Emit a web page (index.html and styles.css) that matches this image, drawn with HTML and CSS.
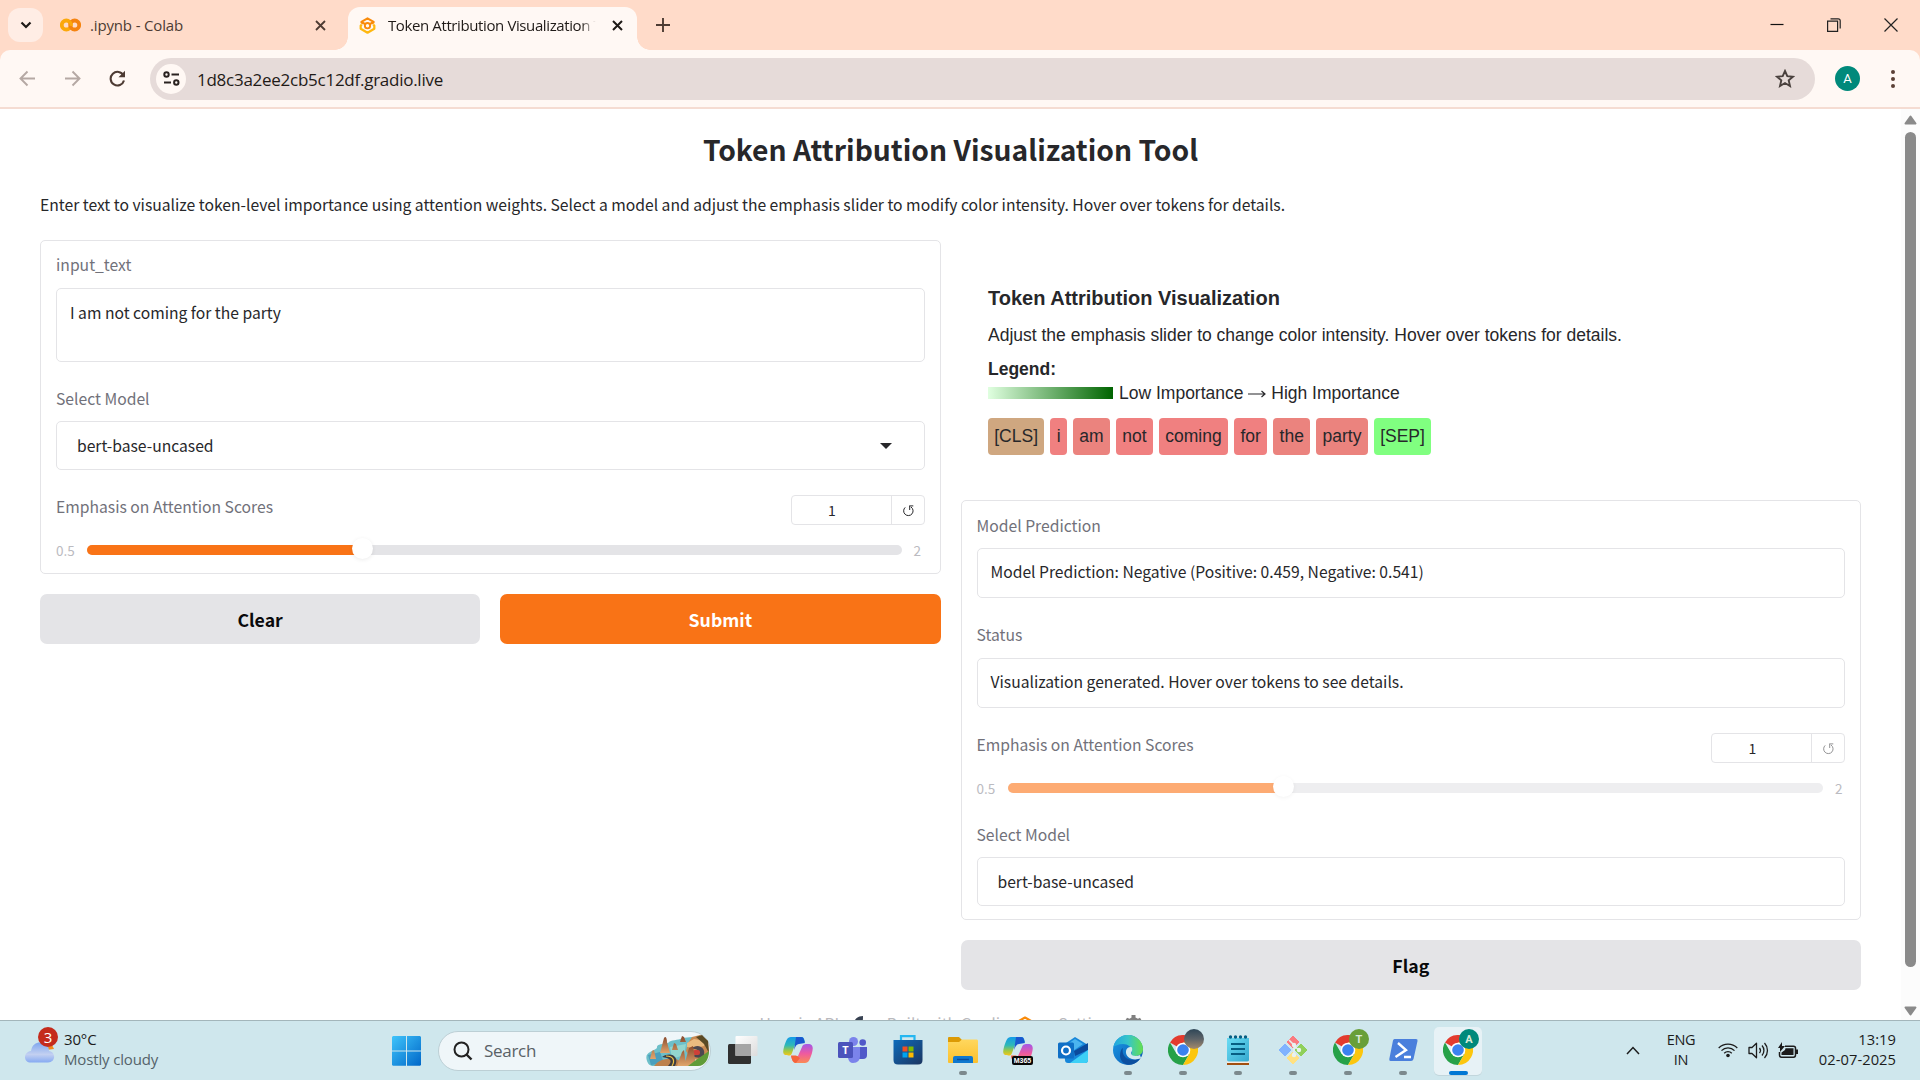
FILE: index.html
```html
<!DOCTYPE html>
<html lang="en">
<head>
<meta charset="utf-8">
<title>Token Attribution Visualization Tool</title>
<link rel="stylesheet" href="styles.css">
</head>
<body>
<svg class="defs" width="0" height="0" aria-hidden="true">
  <defs>
    <linearGradient id="gWin" x1="0" y1="0" x2="1" y2="1"><stop offset="0" stop-color="#3fc4fb"/><stop offset="1" stop-color="#0067c8"/></linearGradient>
    <linearGradient id="gCloud" x1="0" y1="0" x2="0" y2="1"><stop offset="0" stop-color="#7fa6ee"/><stop offset=".6" stop-color="#c3d0f1"/><stop offset="1" stop-color="#86aaf2"/></linearGradient>
    <linearGradient id="gCopA" x1="0" y1="0" x2="0" y2="1"><stop offset="0" stop-color="#129be9"/><stop offset=".45" stop-color="#2fb9b6"/><stop offset=".75" stop-color="#a5c93e"/><stop offset="1" stop-color="#f5c51c"/></linearGradient>
    <linearGradient id="gCopB" x1="0" y1="0" x2="0" y2="1"><stop offset="0" stop-color="#a457e8"/><stop offset=".5" stop-color="#ee5aa0"/><stop offset="1" stop-color="#fb8a55"/></linearGradient>
    <linearGradient id="gStore" x1="0" y1="0" x2="1" y2="1"><stop offset="0" stop-color="#0d6cbc"/><stop offset="1" stop-color="#1c3560"/></linearGradient>
    <linearGradient id="gFold" x1="0" y1="0" x2="0" y2="1"><stop offset="0" stop-color="#ffd75e"/><stop offset="1" stop-color="#fbc02d"/></linearGradient>
    <linearGradient id="gEdge" x1="0" y1="0" x2="1" y2="0"><stop offset="0" stop-color="#20a5e0"/><stop offset=".5" stop-color="#36c5c9"/><stop offset="1" stop-color="#66e04c"/></linearGradient>
    <linearGradient id="gEdgeB" x1="0" y1="0" x2="1" y2="1"><stop offset="0" stop-color="#1a9be6"/><stop offset="1" stop-color="#0a55b0"/></linearGradient>
    <linearGradient id="gNote" x1="0" y1="0" x2="1" y2="1"><stop offset="0" stop-color="#6bdcf4"/><stop offset="1" stop-color="#35a9cf"/></linearGradient>
    <linearGradient id="gPhoto" x1="0" y1="0" x2="0" y2="1"><stop offset="0" stop-color="#2e4657"/><stop offset=".5" stop-color="#5d6368"/><stop offset="1" stop-color="#a58a6a"/></linearGradient>
    <linearGradient id="gTask" x1="0" y1="0" x2="1" y2="1"><stop offset="0" stop-color="#fff"/><stop offset="1" stop-color="#dcdcdc"/></linearGradient>
    <linearGradient id="gRock" x1="0" y1="0" x2="0" y2="1"><stop offset="0" stop-color="#8a4a2c"/><stop offset="1" stop-color="#e0a56c"/></linearGradient>
    <symbol id="gradio" viewBox="0 0 18 18">
      <path d="M9 1.500 15.500 5.200 9 9 2.500 5.200Z" fill="none" stroke="#f98b0b" stroke-width="2.200" stroke-linejoin="round"/>
      <path d="M2 5.500 4.500 7M16 5.500 13.500 7" stroke="#f98b0b" stroke-width="2"/>
      <path d="M3 8 1.800 9V12.400L9 16.600 16.200 12.400V9L15 8" fill="none" stroke="#ffb810" stroke-width="2.400" stroke-linejoin="round"/>
      <circle cx="9" cy="9.200" r="2.800" fill="#fff8f4" stroke="#f98b0b" stroke-width="2"/>
    </symbol>
    <symbol id="chrome" viewBox="0 0 30 30">
      <path d="M15 15 2 7.500A15 15 0 0 1 28 7.500H15Z" fill="#e33b2e"/>
      <path d="M2 7.500A15 15 0 0 0 15 30L21.500 18.800 8.500 18.800Z" fill="#26a148"/>
      <path d="M28 7.500A15 15 0 0 1 15 30L21.500 18.800 21.500 11.200 15 7.500Z" fill="#fcc60e"/>
      <circle cx="15" cy="15" r="7.300" fill="#fff"/><circle cx="15" cy="15" r="5.800" fill="#3b82f0"/>
    </symbol>
    <symbol id="copilot" viewBox="0 0 30 28">
      <path d="M8 1H18C21 1 21 3 22 6L13 6 9 17C8 20 6 20 4 19-1 19 0 15 1 11 3 5 4 1 8 1Z" fill="url(#gCopA)"/>
      <path d="M13 1H18C21 1 21 4 22 7L16 8C13 8 12 12 11 14Z" fill="#1a58cf"/>
      <path d="M22 27H13C10 27 9 24 8 20H15L19 11C20 8 22 8 25 8 31 8 30 13 29 17 27 23 26 27 22 27Z" fill="url(#gCopB)"/>
      <path d="M8 19.500H13L17 22 13 27C10 27 9 24 8 19.500Z" fill="#f5643c"/>
    </symbol>
    <symbol id="reset" viewBox="0 0 14 14">
      <path d="M4.200 3.400A4.700 4.700 0 1 0 10 3M8.200 1.900H12.300M8.700 2V6" fill="none" stroke="currentColor" stroke-width="1"/>
    </symbol>
  </defs>
</svg>

<header class="tabstrip">
  <button class="tab-search"><svg width="12" height="8" viewBox="0 0 12 8"><path d="M1.500 1.500 6 6 10.500 1.500" fill="none" stroke="#1f1a17" stroke-width="2.200"/></svg></button>
  <div class="tab">
    <svg class="tab-icon" width="21" height="14" viewBox="0 0 21 14"><circle cx="6.300" cy="7" r="4.500" fill="none" stroke="#fba80b" stroke-width="3.800"/><circle cx="14.700" cy="7" r="4.500" fill="none" stroke="#f58310" stroke-width="3.800"/><path d="M9.500 3.300A5 5 0 0 1 11 8" fill="none" stroke="#fba80b" stroke-width="3"/></svg>
    <span class="tab-title">.ipynb - Colab</span>
    <svg class="tab-close" width="11" height="11" viewBox="0 0 11 11"><path d="M1 1 10 10M10 1 1 10" stroke="#4d3b33" stroke-width="1.800"/></svg>
  </div>
  <div class="tab active">
    <svg class="tab-icon" width="17" height="17"><use href="#gradio"/></svg>
    <span class="tab-title faded">Token Attribution Visualization T</span>
    <svg class="tab-close" width="11" height="11" viewBox="0 0 11 11"><path d="M1 1 10 10M10 1 1 10" stroke="#1f1a17" stroke-width="2"/></svg>
  </div>
  <svg class="tab-new" width="14" height="14" viewBox="0 0 14 14"><path d="M7 0V14M0 7H14" stroke="#4d3b33" stroke-width="1.900"/></svg>
  <div class="win-controls">
    <svg width="14" height="14" viewBox="0 0 14 14"><path d="M.5 6.500H13.500" stroke="#111" stroke-width="1.200"/></svg>
    <svg width="14" height="14" viewBox="0 0 14 14"><path d="M.6 3.100H10.600V13.300H.6ZM3.500 .8H11.200Q13.200 .8 13.200 2.800V10.500" fill="none" stroke="#222" stroke-width="1.200"/></svg>
    <svg width="14" height="14" viewBox="0 0 14 14"><path d="M.5 .5 13.500 13.500M13.500 .5 .5 13.500" stroke="#222" stroke-width="1.200"/></svg>
  </div>
</header>

<div class="toolbar-back"><nav class="toolbar">
  <svg width="17" height="17" viewBox="0 0 17 17"><path d="M16 8.500H2M8.500 1.500 1.500 8.500 8.500 15.500" fill="none" stroke="#b5a8a3" stroke-width="1.900"/></svg>
  <svg width="17" height="17" viewBox="0 0 17 17"><path d="M1 8.500H15M8.500 1.500 15.500 8.500 8.500 15.500" fill="none" stroke="#b5a8a3" stroke-width="1.900"/></svg>
  <svg class="reload" width="17" height="17" viewBox="0 0 17 17"><path d="M14.500 5.500A6.800 6.800 0 1 0 15 10.500" fill="none" stroke="#4d3b33" stroke-width="2.100"/><path d="M16 .8V7.300H9.500Z" fill="#4d3b33"/></svg>
  <div class="omnibox">
    <span class="site-info"><svg width="17" height="15" viewBox="0 0 17 15"><g fill="none" stroke="#2a2220" stroke-width="2"><circle cx="3.500" cy="3.500" r="2.200"/><path d="M8.500 3.500H16M1 11.500H8"/><circle cx="13.300" cy="11.500" r="2.200"/></g></svg></span>
    <span class="url">1d8c3a2ee2cb5c12df.gradio.live</span>
    <svg class="star" width="20" height="19" viewBox="0 0 20 19"><path d="M10 2 12.300 7.200 18 7.700 13.700 11.400 15 17 10 14 5 17 6.300 11.400 2 7.700 7.700 7.200Z" fill="none" stroke="#4a413e" stroke-width="1.900"/></svg>
  </div>
  <span class="avatar">A</span>
  <svg class="menu" width="4" height="18" viewBox="0 0 4 18"><g fill="#5b4036"><circle cx="2" cy="2" r="2"/><circle cx="2" cy="9" r="2"/><circle cx="2" cy="16" r="2"/></g></svg>
</nav></div>

<div class="viewport">
  <main class="page">
    <h1>Token Attribution Visualization Tool</h1>
    <p class="description"><span>Enter text to visualize token-level importance using attention weights. Select a model and adjust the emphasis slider to modify color intensity. Hover over tokens for details.</span></p>
    <div class="columns">
      <section class="column">
        <div class="panel">
          <div class="label">input_text</div>
          <div class="field textarea">I am not coming for the party</div>
          <div class="label tight">Select Model</div>
          <div class="field select"><span>bert-base-uncased</span><svg width="12" height="6" viewBox="0 0 12 6"><path d="M0 0H12L6 6Z" fill="#27272a"/></svg></div>
          <div class="slider-head"><div class="label">Emphasis on Attention Scores</div>
            <div class="number"><span>1</span><svg width="14" height="14"><use href="#reset"/></svg></div></div>
          <div class="slider"><span>0.5</span><div class="track"><div class="fill"></div><div class="thumb"></div></div><span>2</span></div>
        </div>
        <div class="buttons"><button class="button">Clear</button><button class="button primary">Submit</button></div>
      </section>
      <section class="column">
        <div class="visual">
          <h3>Token Attribution Visualization</h3>
          <p>Adjust the emphasis slider to change color intensity. Hover over tokens for details.</p>
          <div class="legend"><b>Legend:</b><div class="legend-row"><i></i><span>Low Importance <svg class="arrow" width="18" height="10" viewBox="0 0 18 10"><path d="M0 5H17M13.500 2 17 5 13.500 8" fill="none" stroke="#27272a" stroke-width="1.200"/></svg> High Importance</span></div></div>
          <div class="tokens"><span class="t-cls">[CLS]</span><span>i</span><span class="warm">am</span><span>not</span><span>coming</span><span>for</span><span class="warm">the</span><span class="warm">party</span><span class="t-sep">[SEP]</span></div>
        </div>
        <div class="panel output">
          <div class="label tight">Model Prediction</div>
          <div class="field">Model Prediction: Negative (Positive: 0.459, Negative: 0.541)</div>
          <div class="label">Status</div>
          <div class="field">Visualization generated. Hover over tokens to see details.</div>
          <div class="slider-head"><div class="label">Emphasis on Attention Scores</div>
            <div class="number disabled"><span>1</span><svg width="14" height="14"><use href="#reset"/></svg></div></div>
          <div class="slider disabled"><span>0.5</span><div class="track"><div class="fill"></div><div class="thumb"></div></div><span>2</span></div>
          <div class="label">Select Model</div>
          <div class="field select"><span>bert-base-uncased</span></div>
        </div>
        <button class="button">Flag</button>
      </section>
    </div>
    <footer class="footer">
      <span>Use via API</span><svg class="f-rocket" width="14" height="16" viewBox="0 0 14 16"><path d="M12 0C8 0 5 2 4 4L0 6 4 8 6 12 9 10C12 7 12 4 12 0Z" fill="#374151"/></svg>
      <i>·</i><span class="f-built">Built with Gradio</span><svg class="f-gradio" width="18" height="18"><use href="#gradio"/></svg>
      <i>·</i><span class="f-settings">Settings</span><svg class="f-gear" width="17" height="18" viewBox="0 0 17 18"><path d="M6.500 0H10.500V2.500L13 3.800 15 2.800 17 6 15 7.500V10.500L17 12 15 15 12.500 14 10.500 15.500V18H6.500V15.500L4.500 14 2 15 0 12 2 10.500V7.500L0 6 2 2.800 4.500 3.800 6.500 2.500Z" fill="#808080"/></svg>
    </footer>
  </main>
  <aside class="scrollbar">
    <svg width="13" height="10" viewBox="0 0 13 10"><path d="M6.500 1.500 11.500 8.500H1.500Z" fill="#8a8a8a" stroke="#8a8a8a" stroke-width="2" stroke-linejoin="round"/></svg>
    <div class="scroll-thumb"></div>
    <svg class="down" width="13" height="10" viewBox="0 0 13 10"><path d="M6.500 8.500 11.500 1.500H1.500Z" fill="#8a8a8a" stroke="#8a8a8a" stroke-width="2" stroke-linejoin="round"/></svg>
  </aside>
</div>

<footer class="taskbar">
  <div class="weather">
    <div class="weather-icon"><svg width="31" height="21" viewBox="0 0 31 21"><path d="M22 8 27 1 30 7Z" fill="#f48a1c"/><path d="M7 20.500C-1 20.500-1 10 7 9 8 2 13 0 17 .5 22 1 25 4 25 9 32 10 32 20.500 24 20.500Z" fill="url(#gCloud)"/></svg><b>3</b></div>
    <div class="weather-text"><div>30°C</div><div class="muted">Mostly cloudy</div></div>
  </div>
  <svg class="start" width="29" height="30" viewBox="0 0 29 30"><path d="M1 0H14V14.400H0V1ZM15 0H28L29 1V14.400H15ZM0 15.400H14V29.800H1L0 29ZM15 15.400H29V29L28 29.800H15Z" fill="url(#gWin)"/></svg>
  <div class="search">
    <svg width="20" height="20" viewBox="0 0 20 20"><circle cx="8.500" cy="8.500" r="7" fill="none" stroke="#222" stroke-width="2"/><path d="M13.500 13.500 18.500 18.500" stroke="#222" stroke-width="2.400"/></svg>
    <span>Search</span>
    <svg class="scene" width="63" height="32" viewBox="0 0 63 32">
      <path d="M1 26C-2 17 6 17 11 13 10 9 17 9 22 8 25 4 32 6 36 3L46 2 50 14 40 31H8C4 31 2 29 1 26Z" fill="#6cbfc9"/>
      <path d="M2 20 14 17 18 28 5 30Z" fill="#4a9fbd"/><path d="M24 12 40 9 38 20 26 24Z" fill="#92d6cf"/>
      <path d="M42 8 46 2 54 0 62 6 63 18 58 26 46 24 40 16Z" fill="#c98a52"/>
      <path d="M41 8 48 4 60 6 58 11 50 13 41 12Z" fill="#eabb80"/>
      <path d="M50 2 56 0 62 6 63 18 58 9Z" fill="#5a4a25"/>
      <path d="M45 14C51 8 60 12 58 20 56 24 50 23 46 21L50 19C55 18 53 13 45 14Z" fill="#4c4750"/>
      <rect x="47" y="15" width="7" height="5" rx="2" fill="#cf4038"/>
      <path d="M14 18 18 3C20 0 21 4 21 7L24 18Z" fill="url(#gRock)"/>
      <path d="M4 24 6 16 8 15 10 24ZM26 15 28 8 30 9 32 15ZM34 7 36 1 38 2 40 7Z" fill="url(#gRock)"/>
      <path d="M8 31C13 24 22 23 30 24L44 31Z" fill="#bd814d"/>
      <path d="M16 22C25 16 34 22 29 31H22C28 25 23 23 16 22Z" fill="#3c3d42"/>
      <path d="M20 21C28 21 29 26 26 31" stroke="#f3c544" stroke-width="1.200" fill="none"/>
      <path d="M31 31 36 17 38 15 40 31ZM38 31 43 13 47 11 50 31Z" fill="url(#gRock)"/>
      <path d="M42 31 50 25 63 16C63 24 59 31 52 31Z" fill="#5f9b38"/>
    </svg>
  </div>
  <div class="apps">
    <div class="app"><svg width="30" height="30" viewBox="0 0 30 30"><rect y="9" width="23" height="20" rx="1.500" fill="#303030"/><rect x="7.500" y="1" width="22" height="20" rx="1" fill="url(#gTask)"/><rect x="7.500" y="9" width="15.500" height="12" fill="#a5a5a5"/></svg></div>
    <div class="app"><svg width="30" height="28"><use href="#copilot"/></svg></div>
    <div class="app"><svg width="30" height="28" viewBox="0 0 30 28"><circle cx="15.500" cy="5.500" r="4.500" fill="#7b83eb"/><circle cx="24.700" cy="6.500" r="3.300" fill="#5059c9"/><path d="M20 11H29V19Q29 23 25 23H20Z" fill="#5059c9"/><path d="M10 11H22V20Q22 27 15 27 11 27 10 22Z" fill="#7b83eb"/><rect y="6" width="15" height="16" rx="1.500" fill="#4b53bc"/><text x="7.500" y="18" text-anchor="middle" class="icon-letter">T</text></svg></div>
    <div class="app"><svg width="30" height="30" viewBox="0 0 30 30"><path d="M8 6V1.200H21.500V6" fill="none" stroke="#24b7f1" stroke-width="2.200"/><path d="M.5 5H29.500V25Q29.500 29.500 25 29.500H5Q.5 29.500 .5 25Z" fill="url(#gStore)"/><path d="M9.500 11.500H14.500V16.500H9.500Z" fill="#f25022"/><path d="M15.500 11.500H20.500V16.500H15.500Z" fill="#7fba00"/><path d="M9.500 17.500H14.500V22.500H9.500Z" fill="#00a4ef"/><path d="M15.500 17.500H20.500V22.500H15.500Z" fill="#ffb900"/></svg></div>
    <div class="app running"><svg width="30" height="28" viewBox="0 0 30 28"><path d="M0 2Q0 1 1 1H11L14 4V9H0Z" fill="#dc9a05"/><path d="M0 6H11L14 3.500H29Q30 3.500 30 5V26Q30 27 29 27H1Q0 27 0 26Z" fill="url(#gFold)"/><path d="M5 27V22Q5 20 7 20H23Q25 20 25 22V27Z" fill="#0f78cf"/><path d="M9 23.500H21" stroke="#074c9c" stroke-width="1.400"/></svg></div>
    <div class="app"><svg width="31" height="29" viewBox="0 0 31 29"><use href="#copilot" width="30" height="28"/><rect x="9" y="20" width="21" height="9" rx="2" fill="#080808"/><text x="19.500" y="27.300" text-anchor="middle" class="icon-tiny">M365</text></svg></div>
    <div class="app"><svg width="30" height="28" viewBox="0 0 30 28"><path d="M5 9 17 1 30 9V24Q30 27 27 27H10Q7 27 7 24Z" fill="#1686d9"/><path d="M8 9 17 3 25 8 12 17Z" fill="#4bb4ef"/><path d="M16 15 30 7V14L17 20Z" fill="#0b4a9c"/><path d="M12 27 30 14V24Q30 27 27 27Z" fill="#3dd0f6"/><rect y="6.500" width="16" height="16" rx="1.500" fill="#0f6fc6"/><circle cx="8" cy="14.500" r="4" fill="none" stroke="#fff" stroke-width="2.200"/></svg></div>
    <div class="app running"><svg width="30" height="30" viewBox="0 0 30 30"><circle cx="15" cy="15" r="15" fill="url(#gEdgeB)"/><path d="M.3 12A15 15 0 0 1 30 14C30 19 26 21 22 21 18 21 18 19 19 17 19 12 15 9 10 9 5 9 2 11 .3 12Z" fill="url(#gEdge)"/><path d="M10 13C8 20 14 28 27 24 20 33 8 31 7 21 7 17 8 14 10 13Z" fill="#0c4f9f"/><path d="M18.500 12C20 14 19 16 18 18 18 21 23 22 27 20L28 23C20 27 12 22 13 16 13.500 13 16 11.500 18.500 12Z" fill="#d3e9ef"/></svg></div>
    <div class="app running"><svg width="36" height="36" viewBox="0 0 36 36"><use href="#chrome" y="6" width="30" height="30"/><circle cx="26" cy="10" r="10" fill="url(#gPhoto)"/></svg></div>
    <div class="app running"><svg width="22" height="30" viewBox="0 0 22 30"><path d="M0 26H22V30H0Z" fill="#a24f10"/><path d="M0 24H22V28H0Z" fill="#f4ece4"/><path d="M0 3H22V25Q22 26.500 20 26.500H2Q0 26.500 0 25Z" fill="url(#gNote)"/><path d="M4 9H18M4 14H18M4 19H18" stroke="#075e83" stroke-width="1.800"/><g fill="#075e83"><circle cx="3.500" cy="2" r="1.700"/><circle cx="8.500" cy="2" r="1.700"/><circle cx="13.500" cy="2" r="1.700"/><circle cx="18.500" cy="2" r="1.700"/></g></svg></div>
    <div class="app running"><svg width="30" height="30" viewBox="0 0 30 30"><g stroke-linejoin="round"><path d="M15 1 21 7 15 13 9 7Z" fill="#fb7b80" stroke="#fb7b80"/><path d="M7 9 13 15 7 21 1 15Z" fill="#80b3ff" stroke="#80b3ff"/><path d="M23 9 29 15 23 21 17 15Z" fill="#8fd05b" stroke="#8fd05b"/><path d="M15 17 21 23 15 29 9 23Z" fill="#ffe182" stroke="#ffe182"/></g><path d="M11 5 16 10V20M16 11 21 15" stroke="#e8f2f0" stroke-width="1.500" fill="none"/><g fill="#e8f2f0"><circle cx="16" cy="10" r="2.200"/><circle cx="21" cy="15" r="2.200"/><circle cx="16" cy="20" r="2.200"/></g></svg></div>
    <div class="app running"><svg width="36" height="36" viewBox="0 0 36 36"><use href="#chrome" y="6" width="30" height="30"/><circle cx="26" cy="10" r="10" fill="#689f38"/><text x="26" y="14" text-anchor="middle" class="icon-badge">T</text></svg></div>
    <div class="app running"><svg width="29" height="22" viewBox="0 0 29 22"><path d="M5.500 0H27Q29 0 28.500 2L24.500 20Q24 22 22 22H1.500Q0 22 .3 20L4 1.500Q4.300 0 5.500 0Z" fill="#4a7fdc"/><path d="M9 4 17 11 6.500 18M15 18H22" fill="none" stroke="#fff" stroke-width="2.400"/></svg></div>
    <div class="app running current"><svg width="36" height="36" viewBox="0 0 36 36"><use href="#chrome" y="6" width="30" height="30"/><circle cx="26" cy="10" r="10" fill="#00897b"/><text x="26" y="14" text-anchor="middle" class="icon-badge">A</text></svg></div>
  </div>
  <div class="tray">
    <svg width="14" height="9" viewBox="0 0 14 9"><path d="M1 8 7 1.500 13 8" fill="none" stroke="#1c1c1c" stroke-width="1.500"/></svg>
    <div class="lang"><div>ENG</div><div>IN</div></div>
    <svg class="wifi" width="20" height="16" viewBox="0 0 20 16"><g fill="none" stroke="#1c1c1c" stroke-width="1.300"><path d="M.7 6A13 13 0 0 1 19.300 6M3.500 8.600A9 9 0 0 1 16.500 8.600M6.200 11.200A5.400 5.400 0 0 1 13.800 11.200"/></g><circle cx="10" cy="13.500" r="1.800" fill="#1c1c1c"/></svg>
    <svg class="volume" width="21" height="17" viewBox="0 0 21 17"><g fill="none" stroke="#1c1c1c" stroke-width="1.300"><path d="M1 5.500H4L8.500 1.200V15.800L4 11.500H1Z" stroke-linejoin="round"/><path d="M11.500 6A4 4 0 0 1 11.500 11M14 3.500A7.500 7.500 0 0 1 14 13.500M16.500 1A11 11 0 0 1 16.500 16"/></g></svg>
    <svg class="battery" width="21" height="17" viewBox="0 0 21 17"><path d="M7 4.200H15.500Q17.500 4.200 17.500 6.200V13Q17.500 15.200 15.500 15.200H3.500Q1.500 15.200 1.500 13V10" fill="none" stroke="#1c1c1c" stroke-width="1.500"/><path d="M7.500 6.300H15.500V13H3.500V10.500L7 8Z" fill="#1c1c1c"/><path d="M18 7.500H20V12H18Z" fill="#1c1c1c"/><path d="M4 0V4H7L2 10V6H0Z" fill="#1c1c1c"/></svg>
    <div class="clock"><div>13:19</div><div>02-07-2025</div></div>
  </div>
</footer>
</body>
</html>
```
FILE: styles.css
```css
* { box-sizing: border-box; }
body {
  margin: 0;
  width: 1920px;
  height: 1080px;
  overflow: hidden;
  display: flex;
  flex-direction: column;
  background: #fff;
  font-family: "Noto Sans CJK SC", "Noto Sans", sans-serif;
  color: #27272a;
}
svg { display: block; flex: none; }
button { border: 0; font: inherit; padding: 0; }
.defs { position: absolute; }

/* Browser tabs */
.tabstrip {
  flex: none;
  height: 50px;
  display: flex;
  align-items: center;
  background: #ffdbc9;
  font-family: "Open Sans", "Noto Sans", sans-serif;
  font-size: 15px;
  color: #4d3b33;
}
.tab-search {
  width: 35px;
  height: 34px;
  margin-left: 8px;
  border-radius: 12px;
  background: #ffede5;
  display: grid;
  place-items: center;
}
.tab { display: flex; align-items: center; width: 305px; padding: 0 22px 0 17px; }
.tab-icon { margin-right: 9px; }
.tab-title { white-space: nowrap; letter-spacing: -.15px; }
.tab-close { margin-left: auto; }
.tab.active {
  position: relative;
  align-self: flex-end;
  width: 289px;
  height: 43px;
  padding: 0 14px 7px 11px;
  border-radius: 12px 12px 0 0;
  background: #fff8f4;
  color: #1f1a17;
}
.tab.active::before, .tab.active::after {
  content: "";
  position: absolute;
  bottom: 0;
  width: 13px;
  height: 13px;
}
.tab.active::before { left: -13px; background: radial-gradient(circle at 0 0, transparent 12.5px, #fff8f4 13px); }
.tab.active::after { right: -13px; background: radial-gradient(circle at 100% 0, transparent 12.5px, #fff8f4 13px); }
.tab.active .tab-icon { margin-right: 12px; }
.faded {
  width: 212px;
  letter-spacing: -.39px;
  -webkit-mask-image: linear-gradient(90deg, #000 91%, transparent 98%);
  mask-image: linear-gradient(90deg, #000 91%, transparent 98%);
}
.tab-new { margin-left: 19px; }
.win-controls { margin-left: auto; margin-right: 22px; display: flex; gap: 43px; }

/* Address bar */
.toolbar-back { flex: none; background: #ffdbc9; }
.toolbar {
  height: 59px;
  display: flex;
  align-items: center;
  padding: 0 25px 0 19px;
  border-bottom: 2px solid #f5dcd2;
  border-radius: 10px 10px 0 0;
  background: #fff8f4;
}
.toolbar > svg:not(.menu) { margin-right: 28px; }
.toolbar > svg.reload { margin-right: 24px; }
.omnibox {
  flex: 1;
  height: 42px;
  display: flex;
  align-items: center;
  padding: 0 20px 0 6px;
  border-radius: 21px;
  background: #e6dbd9;
}
.site-info { width: 30px; height: 30px; border-radius: 50%; background: #fff8f4; display: grid; place-items: center; }
.url { margin: 2px 0 0 11px; font: 17px/24px "Open Sans", "Noto Sans", sans-serif; letter-spacing: -.26px; color: #1f1a17; }
.star { margin-left: auto; }
.avatar {
  width: 25px;
  height: 25px;
  margin: 0 31px 0 20px;
  border-radius: 50%;
  background: #00897b;
  color: #fff;
  font: 13px/25px Roboto, sans-serif;
  text-align: center;
}

/* Web page */
.viewport { flex: none; height: 911px; display: flex; overflow: hidden; }
.page { flex: 1; padding: 22px 40px 0; }
h1 { margin: 0; font-size: 28.250px; font-weight: 600; line-height: 36px; text-align: center; }
.description { margin: 25px 0 0; font-size: 15.690px; line-height: 26px; letter-spacing: -.007px; white-space: nowrap; }
.columns { display: flex; gap: 20px; margin-top: 22px; }
.column { flex: 1; min-width: 0; }
.panel { height: 334px; padding: 12px 15px 0; border: 1px solid #e4e4e7; border-radius: 5px; }
.label { height: 24px; margin-bottom: 11px; font-size: 15.700px; line-height: 24px; color: #71717a; }
.label.tight { margin-bottom: 10px; }
.field {
  height: 50px;
  padding: 0 13px;
  margin-bottom: 25px;
  border: 1px solid #e4e4e7;
  border-radius: 5px;
  font-size: 15.670px;
  line-height: 46px;
}
.textarea { height: 74px; line-height: 48px; }
.select { height: 49px; display: flex; justify-content: space-between; padding: 0 32px 0 20px; line-height: 47px; }
.select svg { align-self: center; }
.slider-head { display: flex; justify-content: space-between; align-items: flex-start; height: 30px; }
.number {
  width: 134px;
  height: 30px;
  display: flex;
  align-items: center;
  border: 1px solid #e4e4e7;
  border-radius: 4px;
  font-size: 14px;
  line-height: 28px;
}
.number span { width: 100px; padding-right: 18px; text-align: center; border-right: 1px solid #e4e4e7; }
.number svg { margin: 1px 0 0 9px; }
.number.disabled svg { opacity: .5; }
.slider { display: flex; align-items: center; height: 20px; margin-top: 15px; font-size: 13.500px; line-height: 20px; color: #bbbbc1; }
.slider span:first-child { width: 31px; }
.slider span:last-child { width: 23px; padding-left: 12px; }
.track { flex: 1; position: relative; height: 10px; border-radius: 5px; background: #e4e4e7; }
.fill { width: 33.300%; height: 10px; border-radius: 5px 0 0 5px; background: #f97316; }
.thumb {
  position: absolute;
  left: 265px;
  top: -7px;
  width: 21px;
  height: 21px;
  border-radius: 50%;
  background: #fff;
  box-shadow: 0 1px 4px rgba(0, 0, 0, .08);
}
.disabled .track { background: #eeeef0; }
.disabled .fill { background: #fdab73; }
.disabled .thumb { box-shadow: 0 1px 4px rgba(0, 0, 0, .05); }
.disabled span:last-child { width: 22px; }
.number.disabled span { width: 100px; }
.buttons { display: flex; gap: 20px; margin-top: 20px; }
.button {
  display: block;
  width: 100%;
  height: 50px;
  padding-bottom: 1px;
  border-radius: 7px;
  background: #e4e4e7;
  color: #09090b;
  font-size: 17.700px;
  font-weight: 600;
  line-height: 48px;
}
.primary { background: #f97316; color: #fff; }

.visual { height: 260px; padding: 45px 27.500px 0; font-family: "Liberation Sans", Arial, sans-serif; font-size: 17.500px; }
.visual h3 { margin: 0; font-size: 20px; line-height: 26px; }
.visual p { margin: 10px 0 0; line-height: 28px; white-space: nowrap; }
.legend { margin-top: 8px; line-height: 24px; }
.legend b { display: block; }
.legend-row { display: flex; align-items: center; }
.legend i { width: 125px; height: 12px; margin-right: 6px; background: linear-gradient(90deg, #e0ffe0, #006400); }
.arrow { display: inline-block; vertical-align: 0; }
.tokens { display: flex; gap: 6.200px; margin-top: 13px; }
.tokens span { height: 37px; padding: 0 6.250px; border-radius: 4px; background: #f08080; line-height: 36px; }
.tokens .warm { background: #eb837e; }
.tokens .t-cls { background: #cfa780; }
.tokens .t-sep { background: #80ff80; }

.output { height: 420px; margin-bottom: 20px; padding-top: 13px; }
.output .slider + .label { margin-top: 25px; margin-bottom: 10px; }
.footer { display: flex; justify-content: center; margin-top: 22px; font-size: 15.700px; line-height: 24px; color: #b9b9bd; }
.footer i { margin: 0 3px; }
.footer svg { margin-top: 4px; }
.footer .f-rocket { margin-left: 12px; }
.footer .f-gradio { margin-left: 6px; }
.footer .f-settings { margin-left: 3px; }
.footer .f-gear { margin: 3px 0 0 7px; }
.scrollbar { flex: none; width: 19px; padding: 6px 4px 4px 3px; display: flex; flex-direction: column; align-items: center; background: #fcfcfc; }
.scroll-thumb { width: 11px; height: 835px; margin-top: 7px; border-radius: 6px; background: #8a8a8a; }
.down { margin-top: auto; }

/* Taskbar */
.taskbar {
  flex: none;
  height: 60px;
  display: flex;
  align-items: center;
  border-top: 1px solid #a3b6bb;
  background: #cfe7ed;
  font: 15px/20px "Open Sans", "Noto Sans", sans-serif;
  color: #1c1c1c;
}
.weather { width: 392px; display: flex; padding: 0 0 3px 24px; }
.weather-text { letter-spacing: -.15px; }
.muted { color: #55636a; }
.weather-icon { position: relative; width: 40px; padding-top: 13px; }
.weather-icon b {
  position: absolute;
  left: 14px;
  top: -2px;
  width: 20px;
  height: 20px;
  border-radius: 50%;
  background: #c42b1c;
  color: #fff;
  font-weight: 400;
  text-align: center;
}
.search {
  width: 273px;
  height: 40px;
  margin-left: 17px;
  display: flex;
  align-items: center;
  padding: 0 1px 0 14px;
  border: 1px solid #bccfd5;
  border-radius: 20px;
  background: #eff6f9;
  font-size: 17px;
  letter-spacing: -.3px;
  color: #596166;
}
.search span { margin-left: 11px; }
.scene { margin-left: auto; }
.apps { display: flex; gap: 7px; margin-left: 8px; }
.app { position: relative; width: 48px; height: 48px; padding-bottom: 1px; display: grid; place-items: center; border-radius: 5px; }
.app svg[width="36"] { margin: -6px 0 0 6px; }
.running::after { content: ""; position: absolute; left: 20px; bottom: 0; width: 8px; height: 4px; border-radius: 2px; background: #7c898d; }
.current { background: #e7f2f6; box-shadow: 0 1px 0 #c2d6dc; }
.current::after { left: 15px; width: 19px; background: #0078d4; }
.icon-letter { font: bold 11px "Open Sans", sans-serif; fill: #fff; }
.icon-tiny { font: bold 7px "Liberation Sans", sans-serif; fill: #fff; }
.icon-badge { font: bold 11px Roboto, sans-serif; fill: #d9ebd9; }
.tray { margin-left: auto; display: flex; align-items: center; padding: 0 24px 1px 0; }
.lang { width: 34px; margin-left: 24px; text-align: center; font-size: 14.500px; letter-spacing: -.3px; }
.wifi { margin-left: 20px; }
.volume { margin-left: 10px; }
.battery { margin-left: 9px; }
.clock { width: 97px; padding-bottom: 2px; text-align: right; font-size: 14.700px; letter-spacing: .05px; }
```
